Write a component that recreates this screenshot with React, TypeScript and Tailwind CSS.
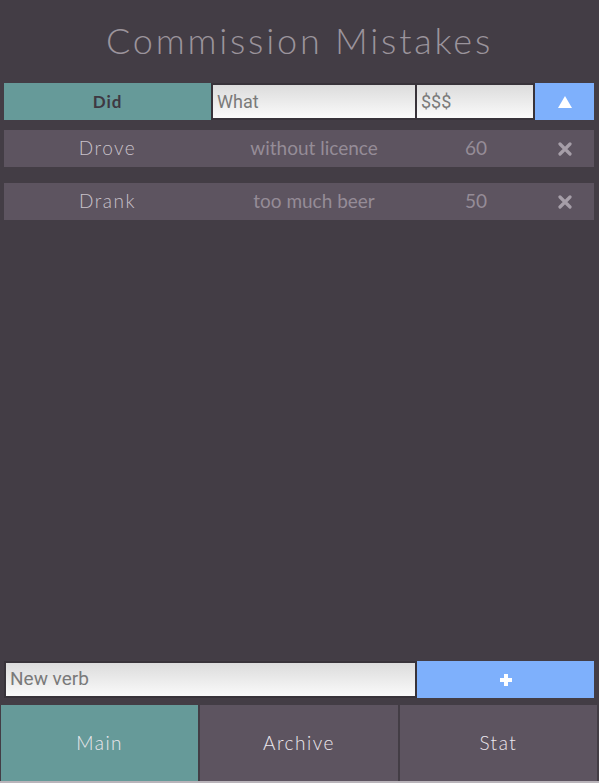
import { useState } from "react";

interface Mistake {
  verb: string;
  what: string;
  cost: number;
}

const initial: Mistake[] = [
  { verb: "Drove", what: "without licence", cost: 60 },
  { verb: "Drank", what: "too much beer", cost: 50 },
];

const tabs = ["Main", "Archive", "Stat"];

export default function App() {
  const [items, setItems] = useState<Mistake[]>(initial);
  const [tab, setTab] = useState("Main");

  const remove = (i: number) => setItems(items.filter((_, idx) => idx !== i));

  return (
    <div className="h-[783px] w-[599px] bg-[#433d45] flex flex-col font-['Lato',sans-serif]">
      {/* Title */}
      <h1 className="h-[83px] pb-[4px] flex items-center justify-center text-[36px] font-light tracking-[2.8px] text-[#9b949c]">
        Commission Mistakes
      </h1>

      {/* Header / new entry row */}
      <div className="flex h-[37px] mx-[4px] mr-[5px]">
        <button className="w-[207px] bg-[#669a99] text-[#3e3842] text-[17px] font-bold tracking-[1px]">
          Did
        </button>
        <input
          placeholder="What"
          className="w-[206px] border-2 border-[#38333a] bg-gradient-to-b from-[#dcdcdc] to-[#fafafa] px-[4px] text-[18px] font-['Roboto',sans-serif] text-[#555] placeholder:text-[#7a7a7a] outline-none"
        />
        <input
          placeholder="$$$"
          className="w-[118px] border-2 border-l-0 border-[#38333a] bg-gradient-to-b from-[#dcdcdc] to-[#fafafa] px-[4px] text-[18px] font-['Roboto',sans-serif] text-[#555] placeholder:text-[#7a7a7a] outline-none"
        />
        <button className="flex-1 bg-[#7eb0fc] flex items-center justify-center">
          <svg width="16" height="14" viewBox="0 0 16 14">
            <path d="M8 1 L15 13 L1 13 Z" fill="#ffffff" />
          </svg>
        </button>
      </div>

      {/* List */}
      <div className="flex-1 flex flex-col gap-[16px] mt-[10px] mx-[4px] mr-[5px]">
        {items.map((m, i) => (
          <div key={i} className="flex h-[37px] bg-[#5d5460] items-center text-[19px]">
            <div className="w-[207px] text-center text-[#c9c2ca] font-light tracking-[1.5px]">{m.verb}</div>
            <div className="w-[206px] text-center text-[#958c97]">{m.what}</div>
            <div className="w-[118px] text-center text-[#958c97]">{m.cost}</div>
            <button onClick={() => remove(i)} className="flex-1 flex items-center justify-center">
              <svg width="14" height="14" viewBox="0 0 14 14">
                <path d="M2 2 L12 12 M12 2 L2 12" stroke="#a69ea8" strokeWidth="3.2" strokeLinecap="round" />
              </svg>
            </button>
          </div>
        ))}
      </div>

      {/* New verb */}
      <div className="flex h-[37px] mx-[4px] mr-[5px] mb-[7px]">
        <input
          placeholder="New verb"
          className="w-[413px] border-2 border-[#38333a] bg-gradient-to-b from-[#dcdcdc] to-[#fafafa] px-[4px] text-[19px] font-['Roboto',sans-serif] text-[#555] placeholder:text-[#7a7a7a] outline-none"
        />
        <button className="flex-1 bg-[#7eb0fc] flex items-center justify-center">
          <svg width="14" height="14" viewBox="0 0 14 14">
            <path d="M7 1 V13 M1 7 H13" stroke="#ffffff" strokeWidth="4" />
          </svg>
        </button>
      </div>

      {/* Tabs */}
      <div className="flex gap-[2px] h-[78px] px-[1px] pr-[2px] border-b-2 border-[#b9b4ba]">
        {tabs.map((t) => (
          <button
            key={t}
            onClick={() => setTab(t)}
            className={`flex-1 text-[19px] font-light tracking-[1.5px] text-[#ece8ee] ${
              t === tab ? "bg-[#669a99]" : "bg-[#5d5460]"
            }`}
          >
            {t}
          </button>
        ))}
      </div>
    </div>
  );
}
